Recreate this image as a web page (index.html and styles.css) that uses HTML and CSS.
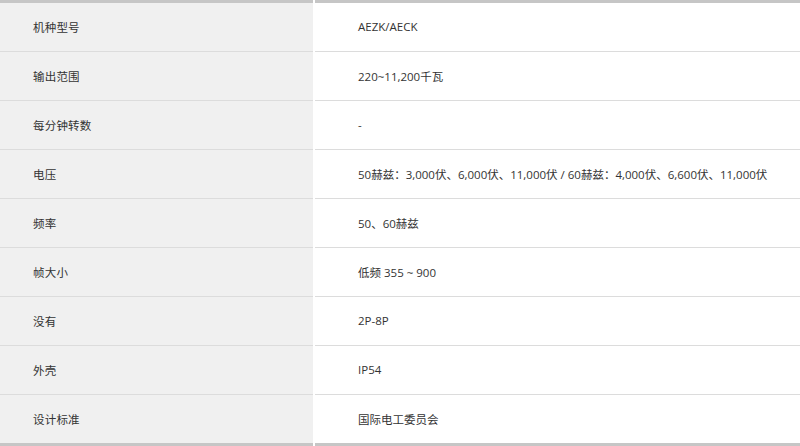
FILE: index.html
```html
<!DOCTYPE html>
<html lang="zh">
<head>
<meta charset="utf-8">
<link rel="stylesheet" href="styles.css">
</head>
<body>
<div class="spec">
  <div class="k first">机种型号</div><div class="v first">AEZK/AECK</div>
  <div class="k">输出范围</div><div class="v">220~11,200千瓦</div>
  <div class="k">每分钟转数</div><div class="v">-</div>
  <div class="k">电压</div><div class="v">50赫兹：3,000伏、6,000伏、11,000伏 / 60赫兹：4,000伏、6,600伏、11,000伏</div>
  <div class="k">频率</div><div class="v">50、60赫兹</div>
  <div class="k">帧大小</div><div class="v">低频 355 ~ 900</div>
  <div class="k">没有</div><div class="v">2P-8P</div>
  <div class="k">外壳</div><div class="v">IP54</div>
  <div class="k last">设计标准</div><div class="v last">国际电工委员会</div>
</div>
</body>
</html>
```
FILE: styles.css
```css
html, body {
  margin: 0;
  padding: 0;
  background: #fff;
}
.spec {
  display: grid;
  grid-template-columns: 313px 1fr;
  column-gap: 2px;
  width: 800px;
  font-family: "Open Sans", "Noto Sans CJK SC", sans-serif;
  font-size: 11.5px;
  color: #333;
}
.k, .v {
  height: 47px;
  display: flex;
  align-items: center;
  border-bottom: 1px solid #dcdcdc;
  padding-bottom: 1px;
}
.k {
  background: #f0f0f0;
  padding-left: 33px;
  letter-spacing: 0.2px;
}
.v {
  background: #fff;
  padding-left: 43px;
}
.first {
  border-top: 3px solid #c6c6c6;
}
.last {
  border-bottom: 3px solid #c6c6c6;
}
```
